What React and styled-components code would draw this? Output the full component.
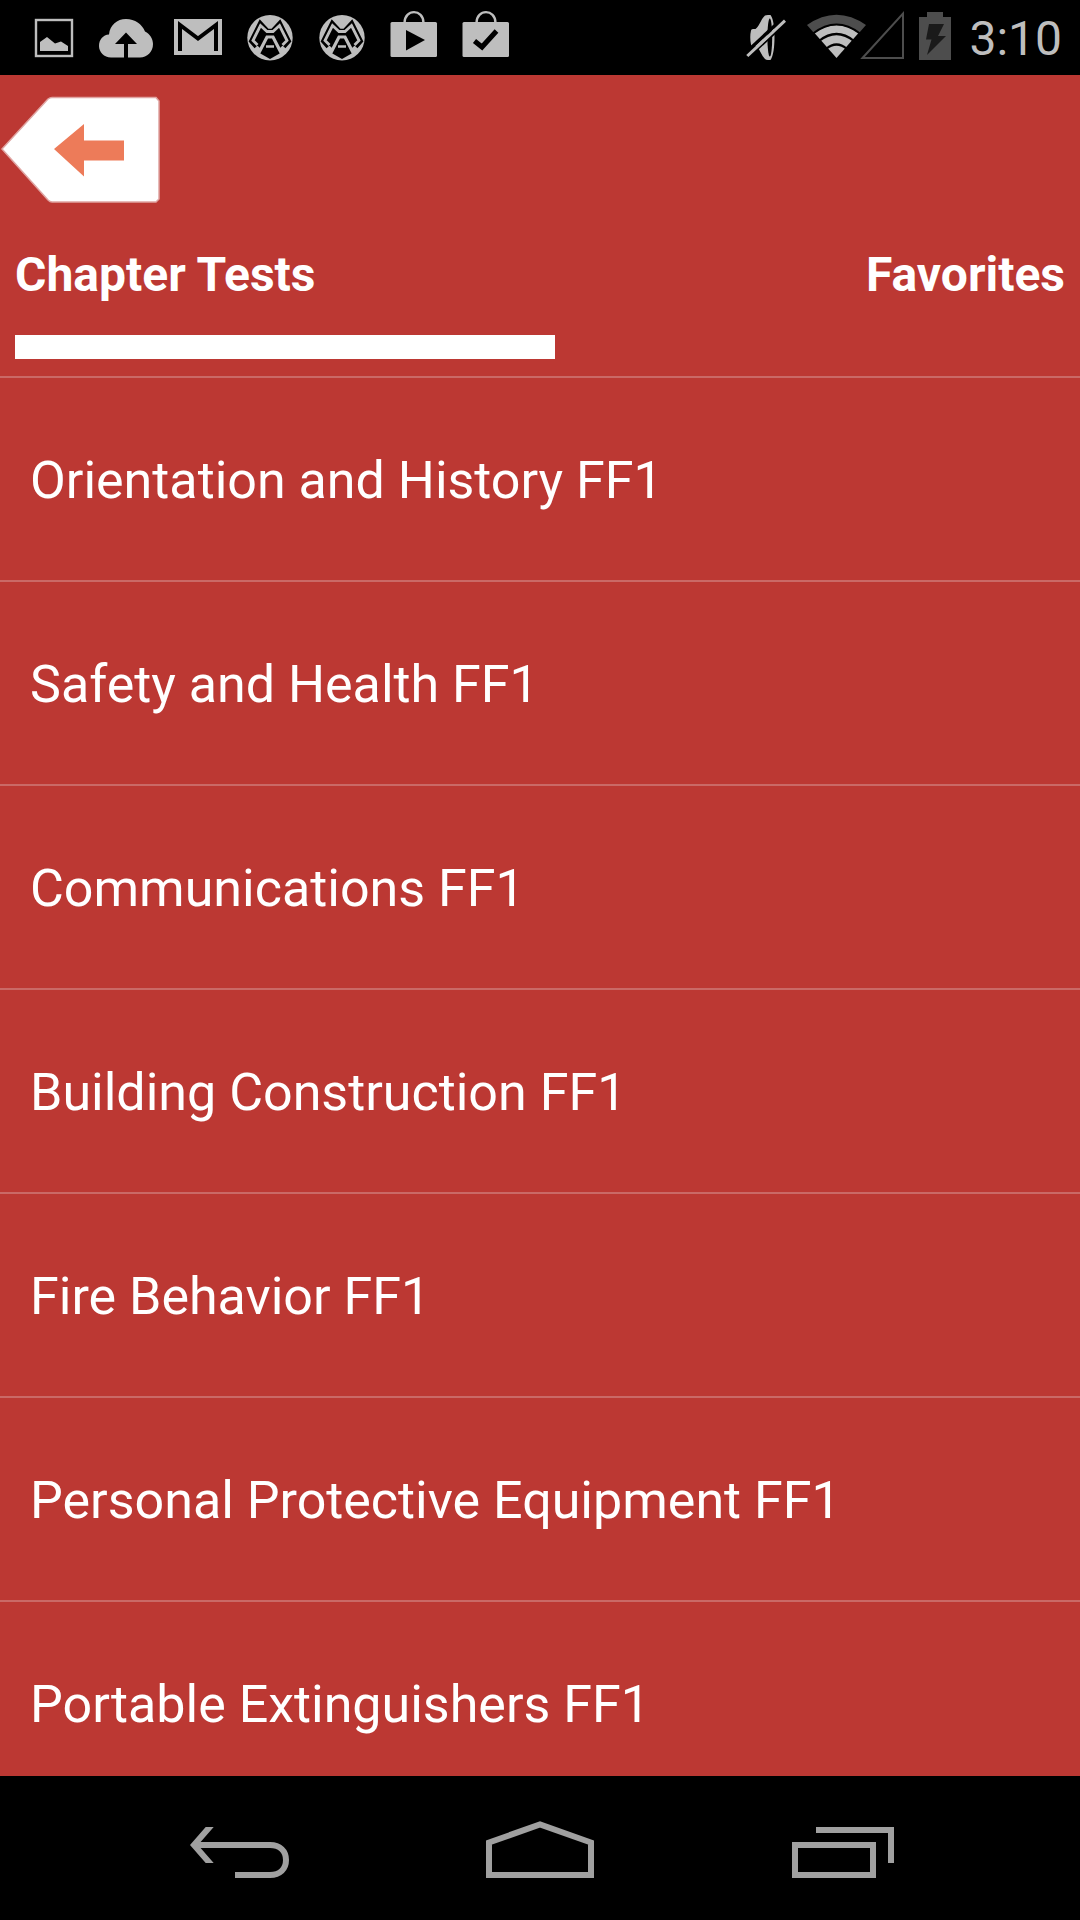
import styled, { createGlobalStyle } from 'styled-components';

const GlobalStyle = createGlobalStyle`
  * {
    box-sizing: border-box;
  }
  body {
    margin: 0;
    background: #000;
    font-family: Roboto, 'Liberation Sans', sans-serif;
  }
`;

const Screen = styled.div`
  display: flex;
  flex-direction: column;
  width: 100%;
  height: 100vh;
  overflow: hidden;
  background: #bc3833;
  color: #fff;
`;

const StatusBar = styled.div`
  display: flex;
  justify-content: space-between;
  align-items: center;
  flex: none;
  height: 75px;
  padding: 0 18px;
  background: #000;
`;

const StatusGroup = styled.div`
  display: flex;
  align-items: center;
`;

const Glyph = styled.svg`
  display: block;
  flex: none;
`;

const Clock = styled.time`
  margin-left: 12px;
  padding-top: 3px;
  color: #bebebe;
  font-size: 48px;
  line-height: 56px;
`;

const Header = styled.header`
  flex: none;
  padding: 20px 0 17px;
`;

const BackButton = styled.button`
  display: block;
  padding: 0;
  border: 0;
  background: none;
  cursor: pointer;
`;

const Tabs = styled.div`
  display: flex;
  justify-content: space-between;
  padding: 42px 15px 32px;
`;

const Tab = styled.button`
  padding: 0;
  border: 0;
  background: none;
  color: #fff;
  font-family: inherit;
  font-size: 48px;
  font-weight: 700;
  line-height: 56px;
  cursor: pointer;
`;

const Indicator = styled.div`
  width: 50%;
  height: 24px;
  margin-left: 15px;
  background: #fff;
`;

const List = styled.ul`
  flex: 1;
  min-height: 0;
  margin: 0;
  padding: 0;
  overflow: hidden;
  list-style: none;
`;

const Row = styled.li`
  height: 204px;
  border-top: 2px solid #ca6966;
`;

const RowLink = styled.a`
  display: flex;
  align-items: center;
  height: 100%;
  padding: 3px 30px 0;
  color: #fff;
  font-size: 52px;
  line-height: 60px;
  text-decoration: none;
`;

const NavBar = styled.nav`
  display: grid;
  grid-template-columns: repeat(3, 1fr);
  flex: none;
  height: 144px;
  padding: 0 90px;
  background: #000;
`;

const NavButton = styled.button`
  display: flex;
  justify-content: center;
  align-items: center;
  padding: 0;
  border: 0;
  background: none;
  cursor: pointer;
`;

const chapters = [
  'Orientation and History FF1',
  'Safety and Health FF1',
  'Communications FF1',
  'Building Construction FF1',
  'Fire Behavior FF1',
  'Personal Protective Equipment FF1',
  'Portable Extinguishers FF1',
];

const StatusIcon = ({ children }) => (
  <Glyph width="72" height="75" viewBox="0 0 72 75" fill="#bebebe" aria-hidden="true">
    {children}
  </Glyph>
);

const PictureIcon = () => (
  <StatusIcon>
    <rect x="18" y="20" width="36" height="36" fill="none" stroke="#bebebe" strokeWidth="2.4" />
    <path d="M22 51V42L29 37L37 43.5L43 41.5L50 46V51Z" />
  </StatusIcon>
);

const CloudIcon = () => (
  <StatusIcon>
    <path d="M21 57.5C14 57.5 9 52 9 46C9 39.5 13 35 19 34.5C20 25 27 19 36 19C45 19 52 24 55 31.5C60 34 63 39 63 44C63 52 57 57.5 50 57.5H38V44H47L36 32.5L25 44H34V57.5Z" />
  </StatusIcon>
);

const MailIcon = () => (
  <StatusIcon>
    <rect x="12" y="19" width="48" height="36" />
    <path d="M18 51V25L36 38.5L54 25V51" fill="none" stroke="#000" strokeWidth="4" />
  </StatusIcon>
);

const HelmetIcon = () => (
  <StatusIcon>
    <circle cx="36" cy="37.7" r="22.7" />
    <path d="M26.5 24.5L33 31.5H39L45.500 24.5L54 40.5L46 48L39 36H33L26 48L18 40.5Z" fill="#000" />
    <path
      d="M23 46L18.5 41L26.500 25L33 32H39L45.500 25L53.5 41L49 46"
      fill="none"
      stroke="#000"
      strokeWidth="6.5"
    />
    <path
      d="M23.5 45L19 40.5L26.500 25.5L33 31.5H39L45.500 25.5L53 40.5L48.5 45"
      fill="none"
      stroke="#bebebe"
      strokeWidth="2.8"
    />
    <path d="M33 36H39L46.5 53L36 59L25.5 53Z" fill="#000" />
    <path d="M24.5 53.5L33 37H39L47.5 53.5" fill="none" stroke="#bebebe" strokeWidth="3.2" />
    <path d="M32 46.5H40" stroke="#bebebe" strokeWidth="2.5" />
  </StatusIcon>
);

const BagIcon = ({ children }) => (
  <StatusIcon>
    <path d="M26.5 23C26.5 8.5 45.5 8.5 45.5 23" fill="none" stroke="#bebebe" strokeWidth="2.4" />
    <rect x="12.5" y="22" width="46.5" height="35" rx="1.5" />
    {children}
  </StatusIcon>
);

const MuteIcon = () => (
  <Glyph width="72" height="75" viewBox="0 0 72 75" aria-hidden="true">
    <path
      d="M19 30.5Q19 29 21 29H23.5C27 27 29 19 33 15.500Q34 15 36 15H38.500C41.500 19 42.500 28 42.500 37S41.500 56 38.500 60H36Q34 60 33 59C29 55 27 47 24 46H21Q19 46 19 44.500Q17.500 37 19 30.500Z"
      fill="#bebebe"
    />
    <ellipse cx="37.8" cy="37.5" rx="2.4" ry="19" fill="#000" />
    <path d="M13 53.5L51 18" stroke="#000" strokeWidth="3.4" />
    <path d="M16.5 57.5L54.5 22.5" stroke="#000" strokeWidth="2" />
    <path d="M15.3 56L53 20.7" stroke="#bebebe" strokeWidth="3" />
  </Glyph>
);

const NetworkIcon = () => (
  <Glyph width="105" height="75" viewBox="0 0 105 75" aria-hidden="true">
    <path d="M3 25Q32.5 4.5 62 25L55 33Q32.5 17 10 33Z" fill="#4d4d4d" />
    <path d="M10.5 33Q32.5 17 54.5 33L32.5 58Z" fill="#bebebe" />
    <path d="M15 41Q32.5 27 50 41M22 49Q32.5 40 43 49" fill="none" stroke="#000" strokeWidth="2.2" />
    <path d="M9 33.5Q32.5 15.5 56 33.5" fill="none" stroke="#000" strokeWidth="2" />
    <path d="M58.5 58L99 13.5V58Z" fill="none" stroke="#4d4d4d" strokeWidth="2" />
  </Glyph>
);

const BatteryIcon = () => (
  <Glyph width="48" height="75" viewBox="0 0 48 75" aria-hidden="true">
    <path d="M10 17H18V12H34V17H42V60H10Z" fill="#4d4d4d" />
    <path d="M20 24H35L29 36H37L18 55L22.5 39.5H17Z" fill="#1a1a1a" />
  </Glyph>
);

const NavIcon = ({ children }) => (
  <Glyph
    width="120"
    height="144"
    viewBox="0 0 120 144"
    fill="none"
    stroke="#a0a0a0"
    strokeWidth="6"
    aria-hidden="true"
  >
    {children}
  </Glyph>
);

export default function App() {
  return (
    <>
      <GlobalStyle />
      <Screen>
        <StatusBar>
          <StatusGroup>
            <PictureIcon />
            <CloudIcon />
            <MailIcon />
            <HelmetIcon />
            <HelmetIcon />
            <BagIcon>
              <path d="M28 30L47 40L28 50.5Z" fill="#000" />
            </BagIcon>
            <BagIcon>
              <path d="M24.5 41L32 47L46.5 31" fill="none" stroke="#000" strokeWidth="5" />
            </BagIcon>
          </StatusGroup>
          <StatusGroup>
            <MuteIcon />
            <NetworkIcon />
            <BatteryIcon />
            <Clock>3:10</Clock>
          </StatusGroup>
        </StatusBar>
        <Header>
          <BackButton aria-label="Back">
            <Glyph width="162" height="110" viewBox="0 0 162 110">
              <path
                d="M2 54L48 4Q50 2.5 52 2.5H156L159 6V104L156 107H52Q50 107 48 105Z"
                fill="#fff"
                stroke="#e0a5a3"
                strokeWidth="1.5"
              />
              <path d="M54 54L84 29V45.5H124V65.5H84V81.5Z" fill="#ed7b59" />
            </Glyph>
          </BackButton>
          <Tabs>
            <Tab>Chapter Tests</Tab>
            <Tab>Favorites</Tab>
          </Tabs>
          <Indicator />
        </Header>
        <List>
          {chapters.map((name) => (
            <Row key={name}>
              <RowLink href="#">{name}</RowLink>
            </Row>
          ))}
        </List>
        <NavBar>
          <NavButton aria-label="System back">
            <NavIcon>
              <path d="M18 69H90C100 69 106 75 106 84S100 99 90 99H55" />
              <path d="M10 69L25.7 51H33.7L18 69L33.7 87H25.7Z" fill="#a0a0a0" stroke="none" />
            </NavIcon>
          </NavButton>
          <NavButton aria-label="Home">
            <NavIcon>
              <path d="M9 66.5L60 48.5L111 66.5V99H9Z" />
            </NavIcon>
          </NavButton>
          <NavButton aria-label="Recent apps">
            <NavIcon>
              <rect x="15" y="69" width="78" height="30" />
              <path d="M36 54H111V87" />
            </NavIcon>
          </NavButton>
        </NavBar>
      </Screen>
    </>
  );
}
